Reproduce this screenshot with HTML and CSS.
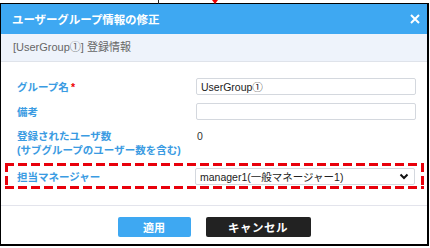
FILE: index.html
```html
<!DOCTYPE html>
<html lang="ja">
<head>
  <meta charset="UTF-8">
  <meta name="viewport" content="width=device-width, initial-scale=1.0">
  <title>ユーザーグループ情報の修正</title>
  <link rel="stylesheet" href="styles.css">
</head>
<body>

  <div class="page">
    <span class="guide-line"></span>
    <span class="guide-arrow"></span>

    <div class="dialog">
      <div class="dialog-head">
        <span class="dialog-title">ユーザーグループ情報の修正</span>
        <svg class="dialog-close" width="10" height="10" viewBox="0 0 10 10"><path d="M1 1 L9 9 M9 1 L1 9" stroke="#fff" stroke-width="2"/></svg>
      </div>
      <div class="dialog-sub">[UserGroup①] 登録情報</div>

      <div class="dialog-body">
        <div class="row">
          <label class="label" for="groupName">グループ名<span class="req">*</span></label>
          <input class="field" type="text" id="groupName" value="UserGroup①">
        </div>
        <div class="row">
          <label class="label" for="note">備考</label>
          <input class="field" type="text" id="note" value="">
        </div>
        <div class="row row-count">
          <span class="label">登録されたユーザ数<br>(サブグループのユーザー数を含む)</span>
          <span class="value">0</span>
        </div>
        <div class="row row-mark">
          <label class="label" for="manager">担当マネージャー</label>
          <div class="select">
            <span>manager1(一般マネージャー1)</span>
            <svg width="10" height="7" viewBox="0 0 10 7"><path d="M1.5 1.5 L5 5 L8.5 1.5" fill="none" stroke="#111" stroke-width="2"/></svg>
          </div>
        </div>
      </div>

      <div class="dialog-foot">
        <button type="button" class="btn btn-ok">適用</button>
        <button type="button" class="btn btn-cancel">キャンセル</button>
      </div>
    </div>
  </div>

</body>
</html>
```

FILE: styles.css
```css
body {
  margin: 0;
  background-color: #fff;
  font-family: "Liberation Sans", Arial, "Noto Sans CJK JP", sans-serif;
  color: #333;
}
.page {
  position: relative;
  padding-top: 3px;
  width: 430px;
  height: 248px;
  box-sizing: border-box;
}
.guide-line {
  position: absolute;
  left: 158px;
  top: 0;
  width: 1px;
  height: 4px;
  background-color: #222;
}
.guide-arrow {
  position: absolute;
  left: 212px;
  top: 0;
  width: 0;
  height: 0;
  border-left: 3px solid transparent;
  border-right: 3px solid transparent;
  border-top: 4px solid #e00;
}
.dialog {
  width: 429px;
  box-sizing: border-box;
  border: 1px solid #000;
  border-right-width: 2px;
  border-bottom-width: 2px;
  background-color: #fff;
}
.dialog-head {
  height: 30px;
  background-color: #3ea8f2;
  display: flex;
  align-items: center;
  justify-content: space-between;
  padding: 0 6px 0 11px;
  color: #fff;
}
.dialog-title {
  font-size: 11.5px;
  font-weight: bold;
  letter-spacing: -0.1px;
}
.dialog-close {
  margin-right: 1px;
}
.dialog-sub {
  height: 27px;
  line-height: 27px;
  padding-left: 12px;
  background-color: #eef3fb;
  border-bottom: 1px solid #dfe3ea;
  color: #666;
  font-size: 11px;
}
.dialog-body {
  padding: 16px 12px 16px 16px;
}
.row {
  display: grid;
  grid-template-columns: 179px 220px;
  align-items: center;
  margin-bottom: 8px;
}
.row-count {
  align-items: start;
  margin-top: 9px;
  margin-bottom: 6px;
}
.label {
  color: #3a9be2;
  font-size: 10.5px;
  font-weight: bold;
  line-height: 14px;
}
.req {
  color: #e00;
  margin-left: 2px;
}
.field {
  height: 17px;
  box-sizing: border-box;
  border: 1px solid #d4d8de;
  border-radius: 2px;
  padding: 0 4px;
  font-family: inherit;
  font-size: 10.5px;
  color: #222;
}
.value {
  font-size: 10.5px;
  line-height: 14px;
  padding-left: 1px;
}
/* red dashed highlight, long dashes drawn with gradients */
.row-mark {
  margin: 0 -9px 0 -12px;
  padding: 5px 8px 4px 12px;
  grid-template-columns: 178px 220px;
  background:
    repeating-linear-gradient(90deg, #e8000b 0 9px, transparent 9px 13px) top left / 100% 3px no-repeat,
    repeating-linear-gradient(90deg, #e8000b 0 9px, transparent 9px 13px) bottom left / 100% 3px no-repeat,
    repeating-linear-gradient(180deg, #e8000b 0 9px, transparent 9px 13px) top left / 3px 100% no-repeat,
    repeating-linear-gradient(180deg, #e8000b 0 9px, transparent 9px 13px) top right / 3px 100% no-repeat;
}
.select {
  height: 17px;
  box-sizing: border-box;
  border: 1px solid #d4d8de;
  border-radius: 2px;
  padding: 0 5px 0 4px;
  display: flex;
  align-items: center;
  justify-content: space-between;
  font-size: 10.5px;
  color: #222;
}
.dialog-foot {
  border-top: 1px solid #e3e4ec;
  padding: 11px 0 7px;
  display: flex;
  justify-content: center;
  gap: 15px;
}
.btn {
  height: 20px;
  border: none;
  border-radius: 2px;
  color: #fff;
  font-family: inherit;
  font-size: 11px;
  font-weight: bold;
  padding: 0;
}
.btn-ok {
  width: 73px;
  background-color: #3ea8f2;
}
.btn-cancel {
  width: 105px;
  background-color: #222;
  font-size: 11.5px;
  letter-spacing: 0.5px;
}
```
